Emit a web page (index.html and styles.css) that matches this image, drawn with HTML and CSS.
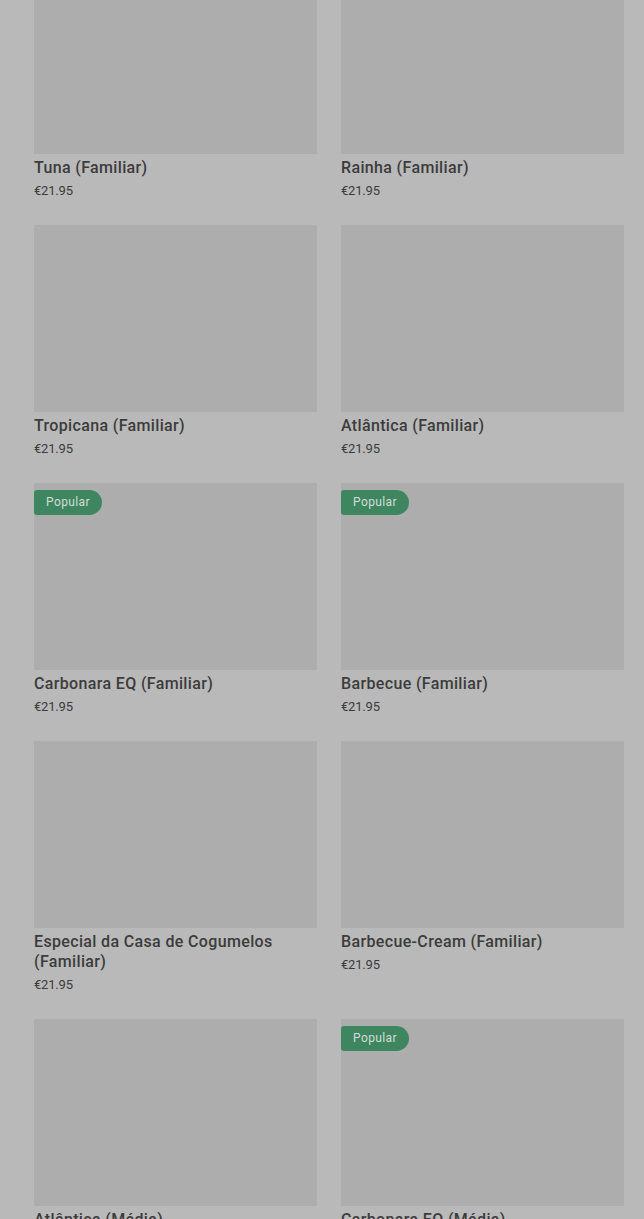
FILE: index.html
```html
<!DOCTYPE html>
<html lang="en">
<head>
    <meta charset="UTF-8">
    <meta name="viewport" content="width=device-width, initial-scale=1.0">
    <title>Menu</title>
    <link rel="stylesheet" href="styles.css">
</head>
<body>
    <div class="grid">
        <div class="card">
            <div class="image"></div>
            <div class="name">Tuna (Familiar)</div>
            <div class="price">€21.95</div>
        </div>
        <div class="card">
            <div class="image"></div>
            <div class="name">Rainha (Familiar)</div>
            <div class="price">€21.95</div>
        </div>
        <div class="card">
            <div class="image"></div>
            <div class="name">Tropicana (Familiar)</div>
            <div class="price">€21.95</div>
        </div>
        <div class="card">
            <div class="image"></div>
            <div class="name">Atlântica (Familiar)</div>
            <div class="price">€21.95</div>
        </div>
        <div class="card">
            <div class="image"><span class="badge">Popular</span></div>
            <div class="name">Carbonara EQ (Familiar)</div>
            <div class="price">€21.95</div>
        </div>
        <div class="card">
            <div class="image"><span class="badge">Popular</span></div>
            <div class="name">Barbecue (Familiar)</div>
            <div class="price">€21.95</div>
        </div>
        <div class="card">
            <div class="image"></div>
            <div class="name">Especial da Casa de Cogumelos (Familiar)</div>
            <div class="price">€21.95</div>
        </div>
        <div class="card">
            <div class="image"></div>
            <div class="name">Barbecue-Cream (Familiar)</div>
            <div class="price">€21.95</div>
        </div>
        <div class="card">
            <div class="image"></div>
            <div class="name">Atlântica (Média)</div>
            <div class="price">€16.95</div>
        </div>
        <div class="card">
            <div class="image"><span class="badge">Popular</span></div>
            <div class="name">Carbonara EQ (Média)</div>
            <div class="price">€16.95</div>
        </div>
    </div>
</body>
</html>
```

FILE: styles.css
```css
body {
    margin: 0;
    background-color: #b9b9b9;
    font-family: Roboto, "Liberation Sans", sans-serif;
    color: #363636;
    overflow: hidden;
}
.grid {
    display: grid;
    grid-template-columns: 283px 283px;
    column-gap: 24px;
    row-gap: 25px;
    padding: 0 20px 0 34px;
    margin-top: -33px;
}
.card {
    display: flex;
    flex-direction: column;
}
.image {
    position: relative;
    height: 187px;
    background-color: #adadad;
}
.badge {
    position: absolute;
    top: 7px;
    left: 0;
    height: 25px;
    line-height: 25px;
    padding: 0 12px;
    border-radius: 3px 13px 13px 3px;
    background-color: #3d8660;
    color: #d4dcd7;
    font-size: 12px;
    letter-spacing: 0.4px;
}
.name {
    margin-top: 4px;
    font-size: 16px;
    line-height: 20px;
    font-weight: 500;
    letter-spacing: 0.35px;
    color: #3c3c3c;
}
.price {
    margin-top: 4px;
    font-size: 13px;
    line-height: 18px;
    letter-spacing: -0.2px;
    color: #3c3c3c;
}
```
